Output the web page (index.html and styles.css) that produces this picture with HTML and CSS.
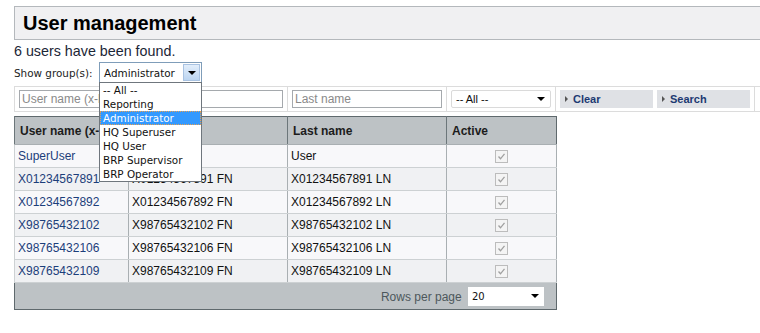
FILE: index.html
```html
<!DOCTYPE html>
<html lang="en">
<head>
    <meta charset="UTF-8">
    <meta name="viewport" content="width=device-width, initial-scale=1.0">
    <title>User management</title>
    <link rel="stylesheet" href="styles.css">
</head>
<body>
    <div class="title-box">
        <h1>User management</h1>
    </div>
    <p class="found">6 users have been found.</p>

    <div class="group-row">
        <label class="group-label">Show group(s):</label>
        <div class="group-select">
            <span class="group-value">Administrator</span>
            <span class="arrow-btn"><span class="tri"></span></span>
            <ul class="group-list">
                <li>-- All --</li>
                <li>Reporting</li>
                <li class="sel">Administrator</li>
                <li>HQ Superuser</li>
                <li>HQ User</li>
                <li>BRP Supervisor</li>
                <li>BRP Operator</li>
            </ul>
        </div>
    </div>

    <div class="filter">
        <div class="cell"><input class="f-user" type="text" placeholder="User name (x-key)"></div>
        <div class="cell"><input class="f-last" type="text" placeholder="Last name"></div>
        <div class="cell">
            <div class="fake-select"><span>-- All --</span><span class="tri"></span></div>
        </div>
        <div class="cell btns">
            <button class="btn" type="button">Clear</button>
            <button class="btn" type="button">Search</button>
        </div>
    </div>

    <table class="users">
        <colgroup>
            <col class="c1"><col class="c2"><col class="c3"><col class="c4">
        </colgroup>
        <thead>
            <tr>
                <th>User name (x-key)</th>
                <th>First name</th>
                <th>Last name</th>
                <th>Active</th>
            </tr>
        </thead>
        <tbody id="user-rows"></tbody>
        <tfoot>
            <tr>
                <td colspan="4" class="foot">
                    <span class="rpp">Rows per page</span>
                    <span class="rows-select"><span>20</span><span class="tri"></span></span>
                </td>
            </tr>
        </tfoot>
    </table>

    <script>
        var users = [
            ["SuperUser", "Super", "User"],
            ["X01234567891", "X01234567891 FN", "X01234567891 LN"],
            ["X01234567892", "X01234567892 FN", "X01234567892 LN"],
            ["X98765432102", "X98765432102 FN", "X98765432102 LN"],
            ["X98765432106", "X98765432106 FN", "X98765432106 LN"],
            ["X98765432109", "X98765432109 FN", "X98765432109 LN"]
        ];

        var check = '<svg class="chk" width="13" height="13" viewBox="0 0 13 13">' +
            '<rect x="0.5" y="0.5" width="12" height="12" fill="#f4f4f4" stroke="#bcbcbc"/>' +
            '<path d="M3.5 6.5 L5.5 8.8 L9.5 3.8" fill="none" stroke="#a0a0a0" stroke-width="1.3"/></svg>';

        var tbody = document.getElementById("user-rows");
        users.forEach(function (u) {
            var row = tbody.insertRow();
            row.innerHTML = '<td><a href="#">' + u[0] + '</a></td>' +
                '<td>' + u[1] + '</td><td>' + u[2] + '</td>' +
                '<td class="act">' + check + '</td>';
        });
    </script>
</body>
</html>
```

FILE: styles.css
```css
body {
  margin: 6px 0 0 14px;
  font-family: "Liberation Sans", Arial, sans-serif;
  color: #111;
  overflow: hidden;
}

.title-box {
  height: 32px;
  padding-left: 8px;
  border: 1px solid #b4b8bc;
  border-right: none;
  background-color: #f0f0f2;
}
h1 {
  margin: 0;
  font-size: 20px;
  line-height: 32px;
  color: #000;
}

.found {
  margin: 3px 0 0;
  font-size: 14.3px;
  line-height: 16px;
  color: #1b2636;
}

.group-row {
  display: flex;
  align-items: center;
  margin-top: 3px;
  height: 21px;
  font-family: "DejaVu Sans", Tahoma, sans-serif;
  font-size: 10.4px;
}
.group-label {
  width: 85px;
  color: #222;
}
.group-select {
  position: relative;
  display: flex;
  align-items: center;
  width: 103px;
  height: 21px;
  box-sizing: border-box;
  border: 1px solid #7f9db9;
  background: #fff;
  padding-left: 4px;
}
.group-value {
  flex: 1;
}
.arrow-btn {
  display: flex;
  align-items: center;
  justify-content: center;
  width: 17px;
  height: 17px;
  margin-right: 1px;
  box-sizing: border-box;
  border: 1px solid #a9c3e2;
  background: linear-gradient(#e2eefb, #bcd5f1);
}
.tri {
  width: 0;
  height: 0;
  border-left: 4px solid transparent;
  border-right: 4px solid transparent;
  border-top: 4px solid #000;
}
.group-list {
  position: absolute;
  top: 19px;
  left: -1px;
  width: 103px;
  box-sizing: border-box;
  margin: 0;
  padding: 0;
  list-style: none;
  border: 1px solid #6f767d;
  background: #fff;
  z-index: 5;
}
.group-list li {
  height: 14px;
  line-height: 14px;
  padding-left: 3px;
  color: #111;
}
.group-list li.sel {
  background-color: #3399ff;
  color: #fff;
  outline: 1px dotted #e8a050;
  outline-offset: -1px;
}

.filter {
  display: flex;
  margin-top: 3px;
  border-top: 1px solid #dcdcdc;
  border-bottom: 1px solid #dcdcdc;
  border-left: 1px solid #dcdcdc;
}
.cell {
  display: flex;
  padding: 3px 4px;
  border-right: 1px solid #dcdcdc;
}
input {
  height: 18px;
  box-sizing: border-box;
  border: 1px solid #a5a9ad;
  padding: 0 2px;
  font-family: "Liberation Sans", Arial, sans-serif;
  font-size: 12px;
}
input::placeholder {
  color: #8a8a8a;
}
.f-user {
  width: 264px;
}
.f-last {
  width: 150px;
}
.fake-select {
  display: flex;
  align-items: center;
  justify-content: space-between;
  width: 100px;
  height: 18px;
  box-sizing: border-box;
  padding: 0 5px 0 4px;
  border: 1px solid #dadada;
  border-radius: 2px;
  background: #fff;
  font-size: 11px;
}
.btns {
  gap: 4px;
}
.btn {
  display: flex;
  align-items: center;
  gap: 5px;
  width: 93px;
  height: 18px;
  padding: 0 0 0 5px;
  border: none;
  background-color: #dfe1e5;
  color: #1d3a72;
  font-family: "Liberation Sans", Arial, sans-serif;
  font-size: 11px;
  font-weight: bold;
}
.btn::before {
  content: "";
  border-top: 3px solid transparent;
  border-bottom: 3px solid transparent;
  border-left: 3px solid #555;
}

.users {
  margin-top: 4px;
  width: 543px;
  table-layout: fixed;
  border-collapse: collapse;
  border: 1px solid #5f696d;
  font-size: 12px;
}
.c1 { width: 114px; }
.c2 { width: 159px; }
.c3 { width: 159px; }
.c4 { width: 110px; }
th {
  height: 27px;
  padding: 0 5px;
  text-align: left;
  background-color: #bdc2c5;
  border-left: 1px solid #6c767a;
  border-bottom: 1px solid #a9afb2;
  color: #1c1c1c;
  white-space: nowrap;
  overflow: hidden;
}
td {
  height: 22px;
  padding: 0 3px;
  border: 1px solid #cdd1d3;
  border-right-color: #a9afb2;
  white-space: nowrap;
  overflow: hidden;
}
tbody tr:nth-child(odd) td {
  background-color: #f8f8fa;
}
tbody tr:nth-child(even) td {
  background-color: #f0f1f3;
}
td a {
  color: #1c3e7a;
  text-decoration: none;
}
.act {
  text-align: center;
}
.chk {
  display: inline-block;
  vertical-align: middle;
}
.foot {
  height: 26px;
  padding: 0 12px 0 0;
  text-align: right;
  background-color: #bdc2c5;
  border: none;
  border-bottom: 1px solid #5f696d;
}
.rpp {
  vertical-align: middle;
  color: #4d585c;
}
.rows-select {
  display: inline-flex;
  align-items: center;
  justify-content: space-between;
  vertical-align: middle;
  width: 76px;
  height: 19px;
  margin-left: 3px;
  box-sizing: border-box;
  padding: 0 5px 0 4px;
  background: #fff;
  font-family: "DejaVu Sans", Tahoma, sans-serif;
  font-size: 10px;
}
```
